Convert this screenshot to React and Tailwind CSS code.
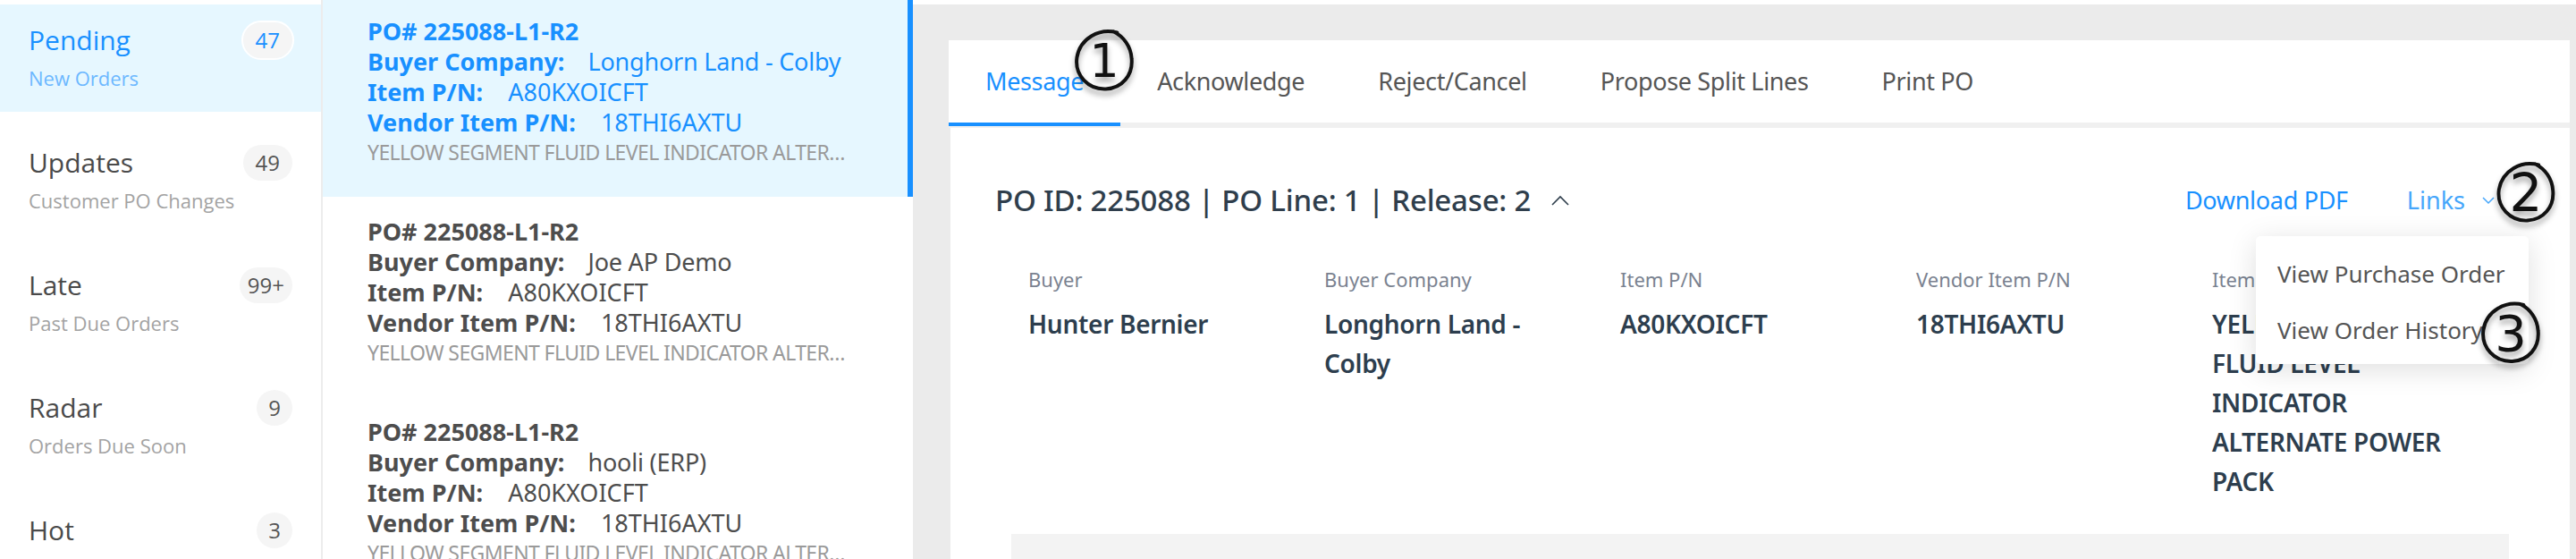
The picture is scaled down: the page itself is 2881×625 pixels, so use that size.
import React from 'react';

const sidebar = [
  { t: 'Pending', s: 'New Orders', n: '47', active: true },
  { t: 'Updates', s: 'Customer PO Changes', n: '49' },
  { t: 'Late', s: 'Past Due Orders', n: '99+' },
  { t: 'Radar', s: 'Orders Due Soon', n: '9' },
  { t: 'Hot', s: 'Critical Items', n: '3' },
];

const orders = [
  { company: 'Longhorn Land - Colby', active: true },
  { company: 'Joe AP Demo' },
  { company: 'hooli (ERP)' },
];

const tabs = ['Message', 'Acknowledge', 'Reject/Cancel', 'Propose Split Lines', 'Print PO'];

const columns = [
  { label: 'Buyer', value: 'Hunter Bernier' },
  { label: 'Buyer Company', value: 'Longhorn Land - Colby' },
  { label: 'Item P/N', value: 'A80KXOICFT' },
  { label: 'Vendor Item P/N', value: '18THI6AXTU' },
  { label: 'Item Description', value: 'YELLOW SEGMENT FLUID LEVEL INDICATOR ALTERNATE POWER PACK' },
];

function Badge({ n, active }) {
  const pad = n.length === 1 ? 'w-[40px] ' : n.length === 2 ? 'px-[14px] ' : 'px-[9px] ';
  return (
    <span
      className={
        'flex h-[40px] items-center justify-center rounded-full bg-[#f5f5f5] text-[24px] leading-none ' +
        pad +
        (active ? 'text-[#1890ff] outline-2 outline-white' : 'text-[#555555]')
      }
    >
      {n}
    </span>
  );
}

function Annotation({ n, className, numClass }) {
  return (
    <div className={'absolute flex items-center justify-center drop-shadow-[0_5px_3px_rgba(0,0,0,0.35)] ' + className}>
      <svg viewBox="0 0 80 80" className="absolute inset-0 h-full w-full" fill="none">
        <path
          d="M56 5 C34 -1 10 12 6 36 C3 58 20 76 42 75 C62 74 76 58 74 37 C73 22 64 10 52 4"
          stroke="#111"
          strokeWidth="4.4"
          strokeLinecap="round"
        />
      </svg>
      <span className={"relative font-['DejaVu_Sans',sans-serif] leading-none text-[#111] " + numClass}>{n}</span>
    </div>
  );
}

export default function App() {
  return (
    <div className="relative flex h-[625px] w-[2881px] overflow-hidden bg-white font-['Noto_Sans',sans-serif]">
      {/* Sidebar */}
      <aside className="flex w-[361px] shrink-0 flex-col gap-[17px] border-r-2 border-[#ececec] pt-[5px] font-['Open_Sans',sans-serif]">
        {sidebar.map((it) => (
          <div
            key={it.t}
            className={'h-[120px] shrink-0 px-[32px] pt-[20px] ' + (it.active ? 'bg-[#e6f7ff]' : '')}
          >
            <div className="flex h-[40px] items-center justify-between">
              <span className={'text-[30px] leading-[40px] ' + (it.active ? 'text-[#1890ff]' : 'text-[#4a4a4a]')}>
                {it.t}
              </span>
              <Badge n={it.n} active={it.active} />
            </div>
            <div
              className={
                'mt-[7px] whitespace-nowrap text-[22px] leading-[30px] ' +
                (it.active ? 'text-[#6cb8ff]' : 'text-[#a3a3a3]')
              }
            >
              {it.s}
            </div>
          </div>
        ))}
      </aside>

      {/* Order list */}
      <section className="flex w-[660px] shrink-0 flex-col gap-[4px]">
        {orders.map((o, i) => {
          const a = o.active;
          const label = a ? 'text-[#1890ff]' : 'text-[#4d4d4d]';
          const val = a ? 'text-[#1890ff]' : 'text-[#4d4d4d]';
          return (
            <div
              key={i}
              className={
                'h-[220px] shrink-0 pl-[50px] pt-[18px] ' +
                (a ? 'border-r-[6px] border-[#1890ff] bg-[#e6f7ff] pr-[54px]' : 'pr-[60px]')
              }
            >
              <div className={'text-[27px] font-bold leading-[34px] ' + label}>PO# 225088-L1-R2</div>
              <div className="whitespace-nowrap text-[27px] leading-[34px]">
                <span className={'font-bold ' + label}>Buyer Company:</span>
                <span className={'ml-[26px] tracking-[-0.2px] ' + val}>{o.company}</span>
              </div>
              <div className="whitespace-nowrap text-[27px] leading-[34px]">
                <span className={'font-bold ' + label}>Item P/N:</span>
                <span className={'ml-[28px] ' + val}>A80KXOICFT</span>
              </div>
              <div className="whitespace-nowrap text-[27px] leading-[34px]">
                <span className={'font-bold ' + label}>Vendor Item P/N:</span>
                <span className={'ml-[28px] ' + val}>18THI6AXTU</span>
              </div>
              <div className="truncate text-[23px] leading-[32px] tracking-[-0.6px] text-[#9a9a9a]">
                YELLOW SEGMENT FLUID LEVEL INDICATOR ALTERNATE POWER PACK
              </div>
            </div>
          );
        })}
      </section>

      {/* Detail panel */}
      <main className="relative mt-[5px] flex min-w-0 flex-1 flex-col bg-[#ebebeb] pl-[40px] pr-[7px] pt-[40px]">
        <div className="flex h-[98px] shrink-0 items-start border-b-[6px] border-[#f0f0f0] bg-white">
          {tabs.map((t, i) => (
            <div
              key={t}
              className={
                'flex items-center whitespace-nowrap px-[41px] text-[27px] tracking-[-0.35px] ' +
                (i === 0 ? 'h-[96px] border-b-4 border-[#1890ff] text-[#1890ff]' : 'h-[92px] text-[#555555]')
              }
            >
              {t}
            </div>
          ))}
        </div>

        <div className="ml-[2px] flex-1 bg-white pt-[59px]">
          <div className="flex h-[44px] items-center pl-[50px] pr-[84px]">
            <h1 className="text-[33px] font-medium leading-[44px] tracking-[-0.2px] text-[#2f3e4c]">
              PO ID: 225088 | PO Line: 1 | Release: 2
            </h1>
            <svg className="ml-[22px] h-[14px] w-[22px]" viewBox="0 0 22 14" fill="none">
              <polyline points="2,12 11,3 20,12" stroke="#2f3e4c" strokeWidth="1.6" />
            </svg>
            <div className="ml-auto flex items-center">
              <span className="text-[27px] tracking-[-0.3px] text-[#1890ff]">Download PDF</span>
              <span className="ml-[66px] text-[27px] text-[#45a6fb]">Links</span>
              <svg className="ml-[19px] h-[9px] w-[14px]" viewBox="0 0 14 9" fill="none">
                <polyline points="1,1 7,7 13,1" stroke="#45a6fb" strokeWidth="1.5" />
              </svg>
            </div>
          </div>

          <div className="mt-[51px] flex pl-[87px]">
            {columns.map((c) => (
              <div key={c.label} className="w-[331px] shrink-0 pr-[50px]">
                <div className="text-[22px] leading-[30px] text-[#7a8290]">{c.label}</div>
                <div className="mt-[13px] text-[28px] font-semibold leading-[44px] tracking-[-0.3px] text-[#2d3e4e]">
                  {c.value}
                </div>
              </div>
            ))}
          </div>

          <div className="mx-[68px] mt-[37px] h-[60px] bg-[#f3f3f3]" />
        </div>

        {/* Links dropdown */}
        <div className="absolute left-[1502px] top-[259px] w-[305px] rounded-[5px] bg-white pb-[6px] pt-[11px] shadow-[0_6px_32px_rgba(0,0,0,0.13)]">
          <div className="flex h-[63px] items-center pl-[24px] text-[26px] text-[#555555]">View Purchase Order</div>
          <div className="flex h-[63px] items-center pl-[24px] text-[26px] text-[#555555]">View Order History</div>
        </div>
      </main>

      <Annotation n="1" className="left-[1198px] top-[32px] h-[72px] w-[74px]" numClass="text-[52px]" />
      <Annotation n="2" className="left-[2788px] top-[180px] h-[71px] w-[74px]" numClass="text-[58px]" />
      <Annotation n="3" className="left-[2772px] top-[335px] h-[75px] w-[72px]" numClass="text-[56px]" />
    </div>
  );
}
